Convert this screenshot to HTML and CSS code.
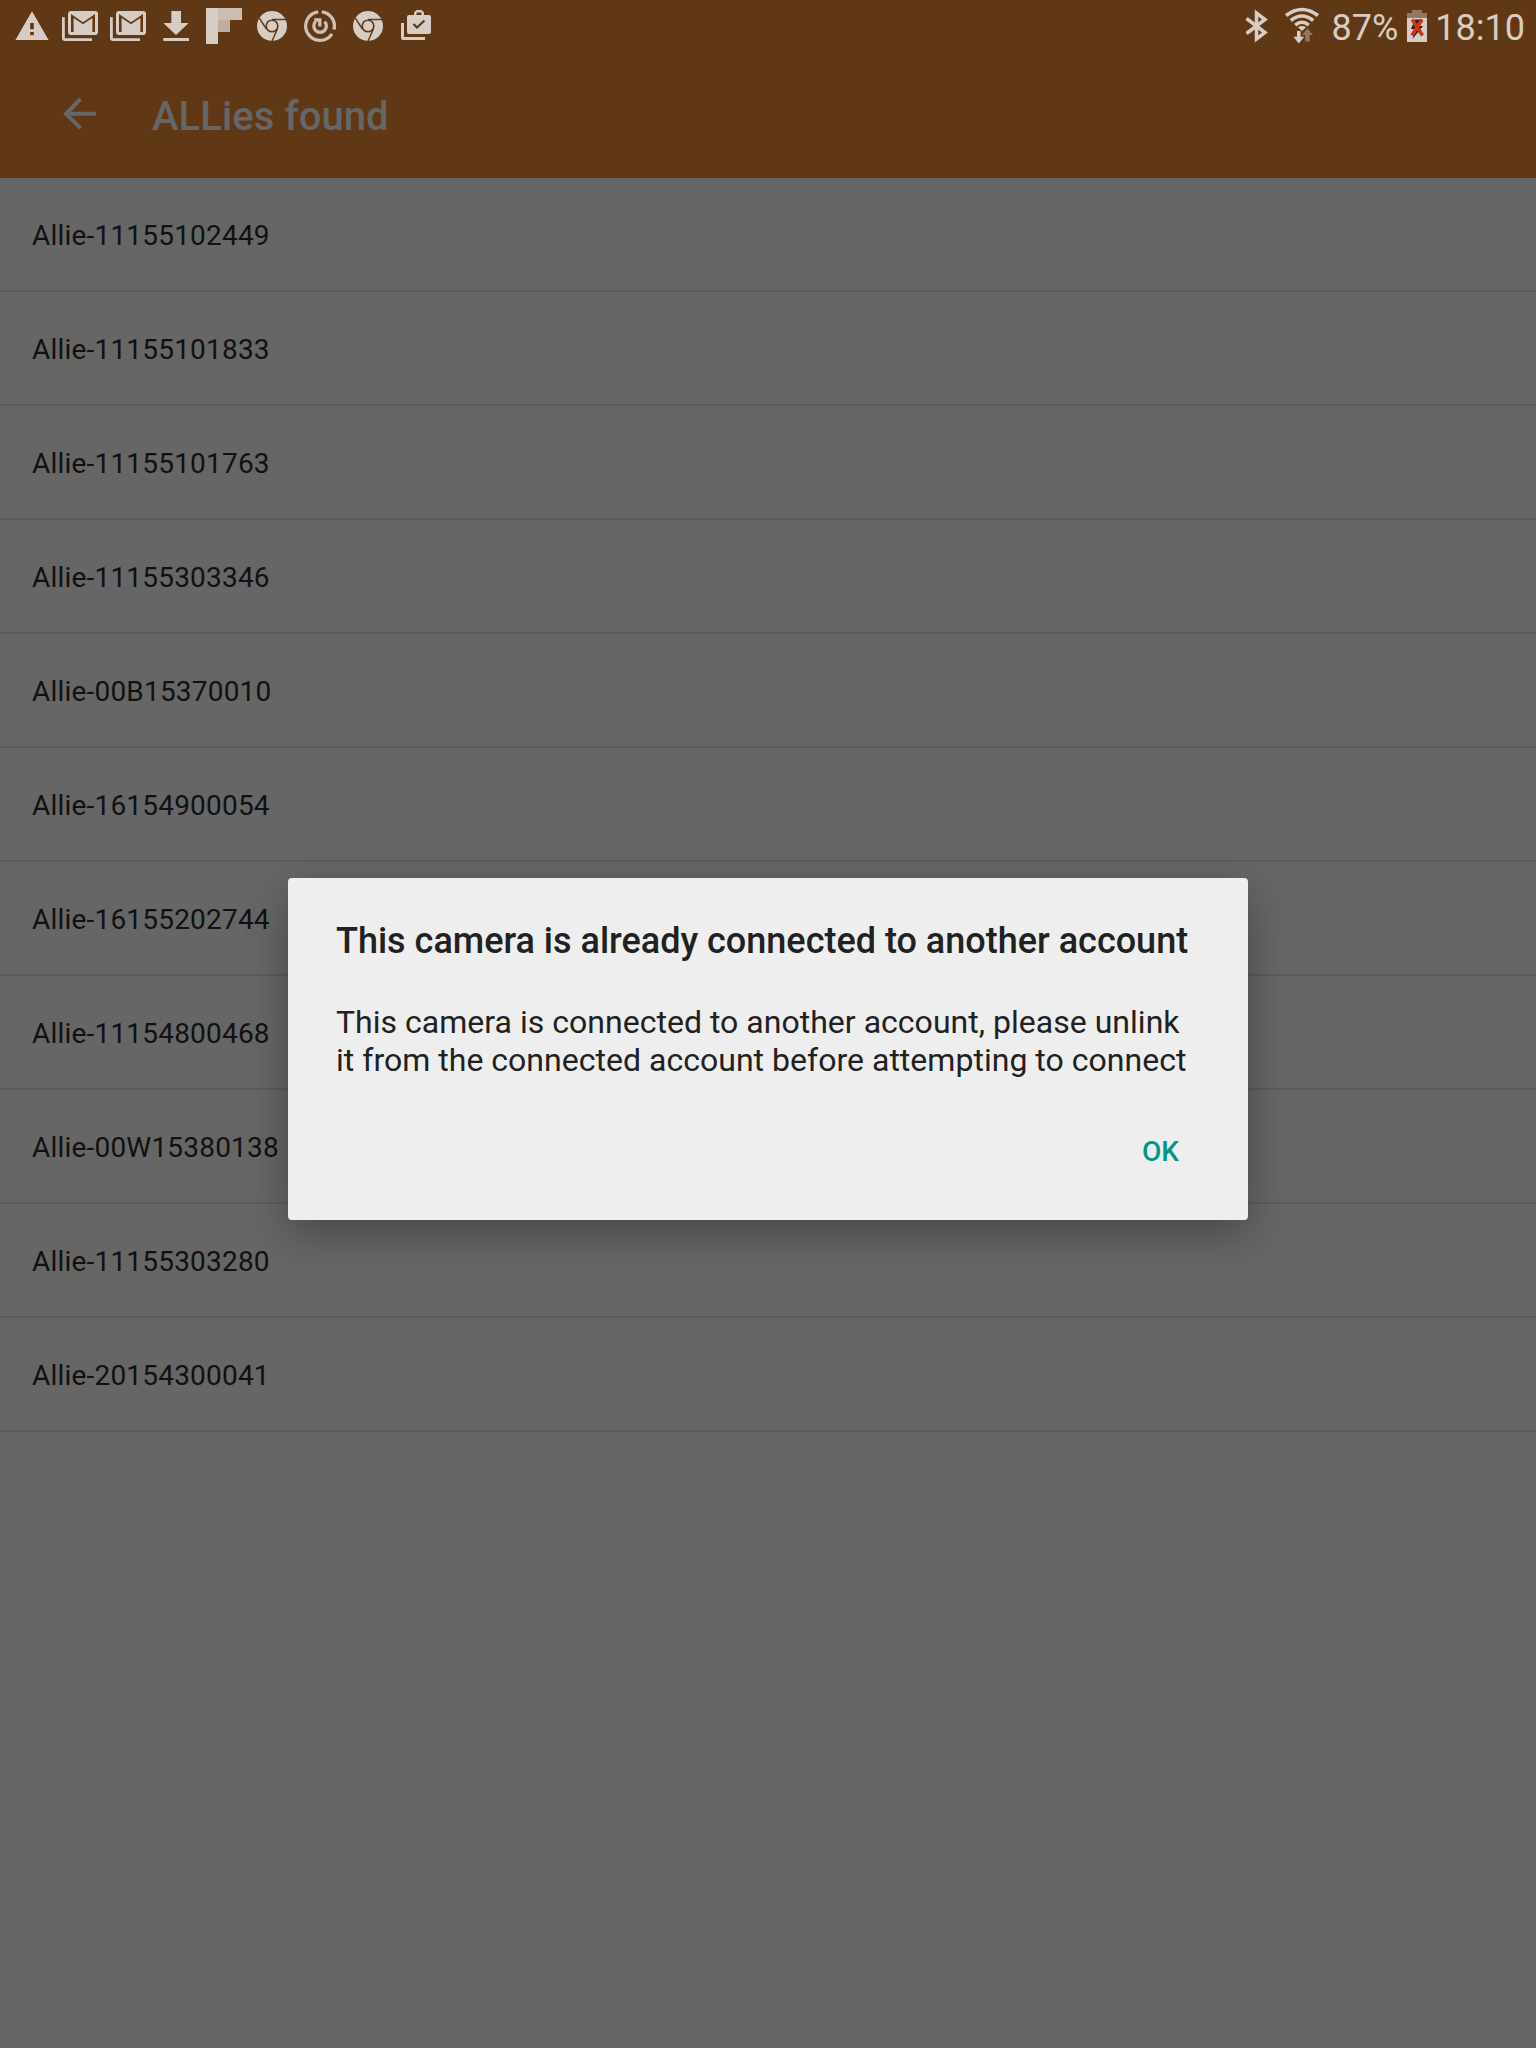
FILE: index.html
```html
<!DOCTYPE html>
<html lang="en">
<head>
<meta charset="utf-8">
<title>ALLies found</title>
<link rel="stylesheet" href="styles.css">
</head>
<body>
<svg class="defs" width="0" height="0">
  <symbol id="gmail" viewBox="0 0 48 52">
    <path d="M6 17.2H8.8V38.2H36V41H9Q6 41 6 38Z"/>
    <path fill-rule="evenodd" d="M15 11H39Q42 11 42 14V32Q42 35 39 35H15Q12 35 12 32V14Q12 11 15 11ZM15 14V32H17.6V18L27 24.3L36.4 18V32H39V14L27 22.2Z"/>
  </symbol>
  <symbol id="chrome" viewBox="0 0 48 52">
    <circle cx="24" cy="26" r="15"/>
    <g class="cut"><circle cx="24" cy="26" r="6.6"/><path d="M24 19.4H38M29.4 29L24 41.2M18.5 29.2L11.3 18.2"/></g>
    <circle cx="24" cy="26" r="5"/>
  </symbol>
</svg>
<div class="screen">
  <header class="header">
    <div class="status">
      <div class="notifications">
        <svg class="icon" viewBox="0 0 48 52"><path fill-rule="evenodd" d="M24 11.3L40.6 40H7.4ZM22.2 23V29.2H25.8V23ZM22.2 32V35.2H25.8V32Z"/></svg>
        <svg class="icon"><use href="#gmail"/></svg>
        <svg class="icon"><use href="#gmail"/></svg>
        <svg class="icon" viewBox="0 0 48 52"><path d="M19.3 11H29V23H36.7L24 35L11.3 23H19.3ZM11.3 38H37V41H11.3Z"/></svg>
        <svg class="icon" viewBox="0 0 48 52"><path d="M6 8H18V44H6Z"/><path class="flip-top" d="M18 8H42V20H18Z"/><path class="flip-mid" d="M18 20H30V32H18Z"/></svg>
        <svg class="icon"><use href="#chrome"/></svg>
        <svg class="icon" viewBox="0 0 48 52"><g class="line soft" stroke-width="3.3"><path d="M25.8 11.8A14.3 14.3 0 0 1 38 29.5M36 33.8A14.3 14.3 0 1 1 22.2 11.8"/><path d="M19.6 21.6A6.3 6.3 0 1 0 28.6 21.6"/><path d="M18.3 20H23.8V26.5"/></g></svg>
        <svg class="icon"><use href="#chrome"/></svg>
        <svg class="icon" viewBox="0 0 48 52"><path d="M9 23H12V37H33V40H11Q9 40 9 38Z"/><path fill-rule="evenodd" d="M17 15H22V12.5L24.5 10H29.5L32 12.5V15H37Q39 15 39 17V32Q39 34 37 34H17Q15 34 15 32V17Q15 15 17 15ZM24.5 15H29.5V12.5H24.5Z"/><path class="tick" d="M21.5 24L25 27.5L32.5 20.5"/></svg>
      </div>
      <div class="system">
        <svg class="bt" viewBox="0 0 30 52"><path class="line" d="M5.5 18.5L24 32.5L15.5 39V13L24 19.5L5.5 33.5" stroke-width="3.5"/></svg>
        <svg class="wifi" viewBox="0 0 40 52"><g class="line" stroke-width="3.6"><path d="M4 15.5Q20 3.5 36 15.5"/><path d="M8.8 20.5Q20 11.5 31.2 20.5"/><path d="M13.2 25.2Q20 19.3 26.8 25.2"/></g><path d="M16 27.2Q20 24.6 24 27.2L20 31Z"/><path d="M15 31H18.6V36.7H22.2L16.8 43.5L11.4 36.7H15Z"/><path class="dim" d="M25.5 28.5L31 35H27.7V41.5H23.3V35H20Z"/></svg>
        <span class="percent">87%</span>
        <svg class="battery" viewBox="0 0 20 52"><path class="dim" d="M5 10H15V13H20V18H0V13H5Z"/><path d="M0 18H20V42H0Z"/><path class="bolt" d="M8 19.5H15L12 26H16L5.5 39L8.5 29H4Z"/><path class="cross" d="M5.2 19.5L15.5 35.5M15 19.5L5 35.5"/></svg>
        <span class="clock">18:10</span>
      </div>
    </div>
    <div class="toolbar">
      <svg class="back" viewBox="0 0 34 34"><path d="M17.5 2L3 16.8L17.5 31.2M2.5 16.8H33"/></svg>
      <h1>ALLies found</h1>
    </div>
  </header>
  <ul class="cameras">
    <li>Allie-11155102449</li>
    <li>Allie-11155101833</li>
    <li>Allie-11155101763</li>
    <li>Allie-11155303346</li>
    <li>Allie-00B15370010</li>
    <li>Allie-16154900054</li>
    <li>Allie-16155202744</li>
    <li>Allie-11154800468</li>
    <li>Allie-00W15380138</li>
    <li>Allie-11155303280</li>
    <li>Allie-20154300041</li>
  </ul>
  <div class="dialog" role="dialog">
    <h2>This camera is already connected to another account</h2>
    <p>This camera is connected to another account, please unlink<br>it from the connected account before attempting to connect</p>
    <div class="actions"><button>OK</button></div>
  </div>
</div>
</body>
</html>
```
FILE: styles.css
```css
* { box-sizing: border-box; margin: 0; padding: 0; }
body { font-family: Roboto, "Noto Sans", sans-serif; background: #666; }
.defs { display: block; }
.screen { position: relative; width: 1536px; height: 2048px; background: #666; overflow: hidden; }
.header { height: 178px; background: #603815; }
.status { display: flex; justify-content: space-between; height: 52px; padding: 0 11px 0 8px; color: #d7cdc4; fill: #d7cdc4; }
.notifications, .system { display: flex; }
.icon { width: 48px; height: 52px; }
.flip-top { fill: #cbbdb2; }
.flip-mid { fill: #bfae9f; }
.cut { fill: #603815; stroke: #603815; stroke-width: 1.5; }
.cut circle { stroke: none; }
.line { fill: none; stroke: #d7cdc4; }
.soft { opacity: .92; }
.tick { fill: none; stroke: #603815; stroke-width: 2.2; }
.dim { fill: #947762; }
.bolt { fill: #222; }
.cross { fill: none; stroke: #cf3512; stroke-width: 3.6; }
.bt { width: 30px; height: 52px; margin-right: 11px; }
.wifi { width: 40px; height: 52px; margin-right: 10px; }
.percent, .clock { font-size: 36px; line-height: 56px; white-space: nowrap; }
.battery { width: 20px; height: 52px; margin: 0 8px 0 9px; }
.toolbar { display: flex; align-items: center; gap: 55px; height: 126px; padding: 0 0 0 63px; }
.back { width: 34px; height: 34px; margin-bottom: 3px; fill: none; stroke: #666; stroke-width: 4; }
h1 { margin-top: 4px; font-size: 40px; font-weight: 500; line-height: 48px; letter-spacing: .08px; color: #666; }
.cameras { list-style: none; }
.cameras li { height: 114px; padding-left: 32px; border-bottom: 2px solid #5c5c5c; font-size: 28px; line-height: 116px; letter-spacing: .2px; color: #111; }
.dialog { position: absolute; left: 288px; top: 878px; width: 960px; height: 342px; padding: 40px 48px 0; background: #eee; border-radius: 4px; box-shadow: 0 14px 44px rgba(0, 0, 0, .3); color: #212121; }
h2 { font-size: 36px; font-weight: 500; line-height: 46px; white-space: nowrap; }
.dialog p { margin-top: 39px; font-size: 32px; line-height: 38px; letter-spacing: .02px; white-space: nowrap; }
.actions { display: flex; justify-content: flex-end; margin-top: 37px; padding-right: 21px; }
button { border: 0; background: none; font: 500 28px/72px Roboto, sans-serif; color: #009688; }
```
